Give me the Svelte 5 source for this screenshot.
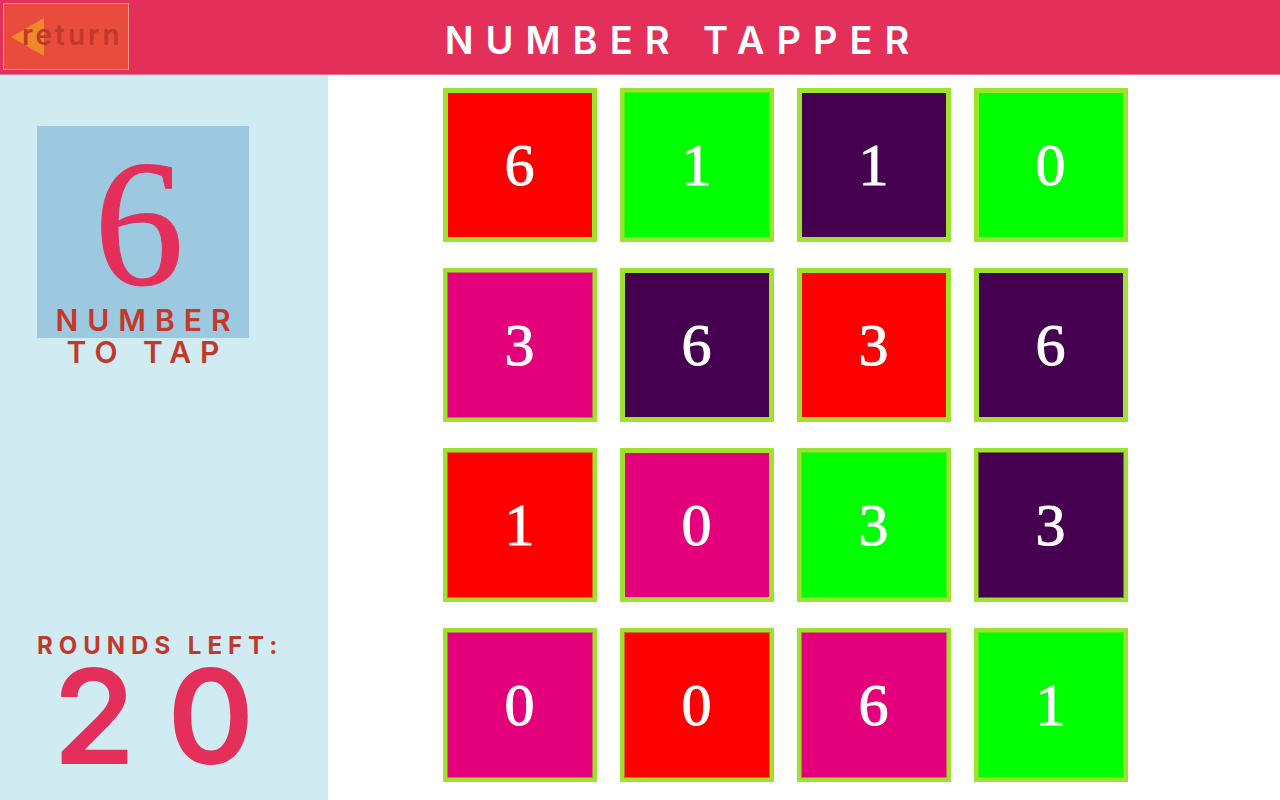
<script>
  const target = 6;
  let rounds = $state(20);

  const tiles = [
    { n: 6, color: 'red' },
    { n: 1, color: 'green', soft: true },
    { n: 1, color: 'purple' },
    { n: 0, color: 'green' },
    { n: 3, color: 'pink', soft: true },
    { n: 6, color: 'purple' },
    { n: 3, color: 'red' },
    { n: 6, color: 'purple' },
    { n: 1, color: 'red', soft: true },
    { n: 0, color: 'pink' },
    { n: 3, color: 'green', soft: true },
    { n: 3, color: 'purple', soft: true },
    { n: 0, color: 'pink', soft: true },
    { n: 0, color: 'red', soft: true },
    { n: 6, color: 'pink', soft: true },
    { n: 1, color: 'green', soft: true }
  ];

  function tap(n) {
    if (n === target && rounds > 0) rounds -= 1;
  }
</script>

<div class="app">
  <header>
    <button class="return" type="button">
      <svg viewBox="0 0 33 38" width="33" height="38" aria-hidden="true">
        <path d="M0 19 33 0V38Z" fill="#f0892a" />
      </svg>
      <span>return</span>
    </button>
    <h1>NUMBER TAPPER</h1>
  </header>

  <div class="body">
    <aside>
      <section class="target">
        <div class="panel">{target}</div>
        <h2>NUMBER TO TAP</h2>
      </section>
      <section class="rounds">
        <h3>ROUNDS LEFT:</h3>
        <p>{rounds}</p>
      </section>
    </aside>

    <main>
      {#each tiles as tile}
        <button type="button" class="tile {tile.color}" class:soft={tile.soft} onclick={() => tap(tile.n)}>{tile.n}</button>
      {/each}
    </main>
  </div>
</div>

<style>
  :global(body) {
    margin: 0;
    background: #fff;
  }
  .app {
    display: flex;
    flex-direction: column;
    min-height: 100vh;
    font-family: Inter, 'Liberation Sans', sans-serif;
  }
  h1, h2, h3, p {
    margin: 0;
  }
  button {
    box-sizing: border-box;
    padding: 0;
    cursor: pointer;
  }
  header {
    display: grid;
    grid-template-columns: 1fr auto 1fr;
    box-sizing: border-box;
    min-height: 75px;
    padding: 3px;
    background: #e42f5a;
    border-bottom: 1px solid #e27894;
  }
  .return {
    display: grid;
    align-items: center;
    justify-self: start;
    width: 126px;
    height: 67px;
    background: #e94c3d;
    border: 1px solid #f59a8a;
    color: #c1392b;
    font: 600 28px/32px Inter, 'Liberation Sans', sans-serif;
    letter-spacing: 3px;
  }
  .return svg,
  .return span {
    grid-area: 1 / 1;
  }
  .return svg {
    margin-left: 7px;
  }
  .return span {
    padding: 0 0 4px 18px;
    text-align: left;
  }
  h1 {
    align-self: center;
    padding: 6px 0 0 86px;
    color: #fff;
    font-size: 38px;
    line-height: 48px;
    font-weight: 600;
    letter-spacing: 12px;
  }
  .body {
    display: flex;
    flex: 1;
  }
  aside {
    display: flex;
    flex-direction: column;
    justify-content: space-between;
    box-sizing: border-box;
    flex: 0 0 328px;
    padding: 51px 37px 30px;
    background: #d0ecf2;
  }
  .target {
    width: 212px;
  }
  .panel {
    box-sizing: border-box;
    height: 212px;
    padding-right: 8px;
    background: #9cc8e0;
    color: #e42f5a;
    font: 180px/196px 'Liberation Serif', serif;
    text-align: center;
    -webkit-text-stroke: 1px #e42f5a;
  }
  h2 {
    margin-top: -34px;
    padding: 0 8px 0 17px;
    color: #c1392b;
    font-size: 30px;
    line-height: 32px;
    font-weight: 600;
    letter-spacing: 9px;
    text-align: center;
  }
  h3 {
    color: #c1392b;
    font-size: 24px;
    line-height: 32px;
    font-weight: 700;
    letter-spacing: 6px;
    white-space: nowrap;
  }
  .rounds p {
    padding-left: 16px;
    color: #e42f5a;
    font-size: 132px;
    line-height: 108px;
    font-weight: 600;
    letter-spacing: 32px;
  }
  main {
    flex: 1;
    display: grid;
    grid-template-columns: repeat(4, 154px);
    grid-auto-rows: 154px;
    gap: 26px 23px;
    justify-content: center;
    align-content: start;
    padding: 13px 38px 18px 0;
  }
  .tile {
    border: 5px solid #9de22e;
    color: #fff;
    font: 60px/68px 'Liberation Serif', serif;
    -webkit-text-stroke: 1px #fff;
  }
  .soft {
    border-width: 4px;
    box-shadow: inset 0 0 0 1px #9de22e80;
  }
  .red { background: #f00; }
  .green { background: #0f0; }
  .purple { background: #45004f; }
  .pink { background: #e4007b; }
</style>
